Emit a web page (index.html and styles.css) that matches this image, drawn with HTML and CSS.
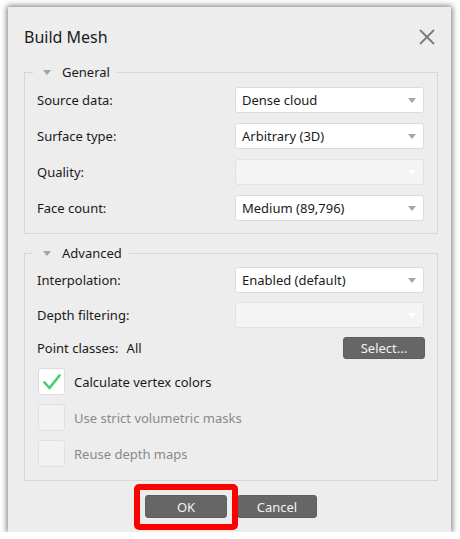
FILE: index.html
```html
<!DOCTYPE html>
<html>
<head>
<meta charset="utf-8">
<link rel="stylesheet" href="styles.css">
</head>
<body>
<div class="dialog">
  <div class="titlebar">
    <span class="title">Build Mesh</span>
    <svg class="close" width="16" height="16" viewBox="0 0 16 16"><path d="M1 1L15 15M15 1L1 15" stroke="#7a7a7a" stroke-width="1.8" fill="none"/></svg>
  </div>

  <fieldset class="group">
    <legend class="legend"><span class="tri"></span>General</legend>
    <div class="rows">
      <div class="row"><span class="label">Source data:</span><div class="combo"><span>Dense cloud</span><span class="arrow"></span></div></div>
      <div class="row"><span class="label">Surface type:</span><div class="combo"><span>Arbitrary (3D)</span><span class="arrow"></span></div></div>
      <div class="row"><span class="label">Quality:</span><div class="combo disabled"><span></span><span class="arrow"></span></div></div>
      <div class="row"><span class="label">Face count:</span><div class="combo"><span>Medium (89,796)</span><span class="arrow"></span></div></div>
    </div>
  </fieldset>

  <fieldset class="group adv">
    <legend class="legend"><span class="tri"></span>Advanced</legend>
    <div class="rows tight">
      <div class="row"><span class="label">Interpolation:</span><div class="combo"><span>Enabled (default)</span><span class="arrow"></span></div></div>
      <div class="row"><span class="label">Depth filtering:</span><div class="combo disabled"><span></span><span class="arrow"></span></div></div>
      <div class="pc-row"><span class="label">Point classes:</span><span class="all">All</span><button class="btn select">Select...</button></div>
      <div class="check-row"><span class="box"><svg width="18" height="16" viewBox="0 0 18 16"><path d="M1.5 8.5L6.5 14L16.5 1.5" stroke="#3dd06b" stroke-width="2.6" fill="none" stroke-linecap="round" stroke-linejoin="round"/></svg></span><span class="clabel">Calculate vertex colors</span></div>
      <div class="check-row off"><span class="box"></span><span class="clabel">Use strict volumetric masks</span></div>
      <div class="check-row off"><span class="box"></span><span class="clabel">Reuse depth maps</span></div>
    </div>
  </fieldset>

  <div class="buttons">
    <span class="highlight"><button class="btn ok">OK</button></span>
    <button class="btn cancel">Cancel</button>
  </div>
</div>
</body>
</html>
```

FILE: styles.css
```css
* { box-sizing: border-box; }
html, body { margin: 0; padding: 0; background: #ffffff; }
body { font-family: "Noto Sans", "Open Sans", sans-serif; font-size: 13px; color: #1a1a1a; }

.dialog {
  margin: 7px 0 0 8px;
  width: 443px;
  height: 525px;
  background: #ededed;
  box-shadow: 0 0 6px 1px rgba(0,0,0,0.55);
  padding: 0 13px 0 16px;
  display: flex;
  flex-direction: column;
}

.titlebar {
  height: 56px;
  padding-top: 3px;
  display: flex;
  align-items: center;
  justify-content: space-between;
}
.title { font-size: 16px; color: #1a1a1a; }
.close { margin-right: 3px; }

.group {
  margin: 0;
  border: 1px solid #d6d6d6;
  padding: 6px 13px 12px 12px;
  min-width: 0;
}
.adv { margin-top: 10px; padding-top: 5px; padding-bottom: 13px; }

.legend {
  margin-left: -4px;
  padding: 0 7px 0 10px;
  height: 18px;
  line-height: 18px;
  display: flex;
  align-items: center;
  font-size: 13px;
}
.tri {
  width: 0; height: 0;
  border-left: 4px solid transparent;
  border-right: 4px solid transparent;
  border-top: 5px solid #a3a3a3;
  margin-right: 11px;
}

.rows { display: flex; flex-direction: column; gap: 10px; }
.rows.tight { gap: 9px; }

.row {
  display: grid;
  grid-template-columns: 198px 1fr;
  align-items: center;
  height: 26px;
}

.combo {
  height: 26px;
  background: #ffffff;
  border: 1px solid #dcdcdc;
  border-radius: 3px;
  display: flex;
  align-items: center;
  justify-content: space-between;
  padding: 0 7px 0 6px;
}
.combo.disabled { background: #f4f4f4; border-color: #e2e2e2; }
.arrow {
  width: 0; height: 0;
  border-left: 4px solid transparent;
  border-right: 4px solid transparent;
  border-top: 5px solid #a6a6a6;
}
.combo.disabled .arrow { border-top-color: #ffffff; }

.pc-row {
  display: flex;
  align-items: center;
  height: 22px;
}
.all { margin-left: 8px; }

.btn {
  font-family: inherit;
  font-size: 13px;
  background: #666666;
  color: #f2f2f2;
  border: 1px solid #5e5e5e;
  border-radius: 3px;
  height: 22px;
  padding: 0;
}
.select { margin-left: auto; width: 82px; margin-right: -1px; }

.check-row {
  display: flex;
  align-items: center;
  height: 27px;
}
.box {
  width: 27px; height: 27px;
  background: #ffffff;
  border: 1px solid #dcdcdc;
  border-radius: 3px;
  display: flex;
  align-items: center;
  justify-content: center;
  margin-left: 1px;
}
.box svg { margin-top: 1px; }
.clabel { margin-left: 9px; }
.check-row.off .box { background: #f2f2f2; border-color: #e0e0e0; }
.check-row.off .clabel { color: #8a8a8a; }

.buttons {
  margin-top: 14px;
  display: flex;
  justify-content: center;
  gap: 10px;
}
.highlight { position: relative; display: inline-flex; }
.highlight::after {
  content: "";
  position: absolute;
  left: -11px; right: -11px; top: -11px; bottom: -12px;
  border: 6px solid #ff0000;
  border-radius: 5px;
}
.ok { width: 82px; height: 23px; }
.cancel { width: 80px; height: 23px; }
```
